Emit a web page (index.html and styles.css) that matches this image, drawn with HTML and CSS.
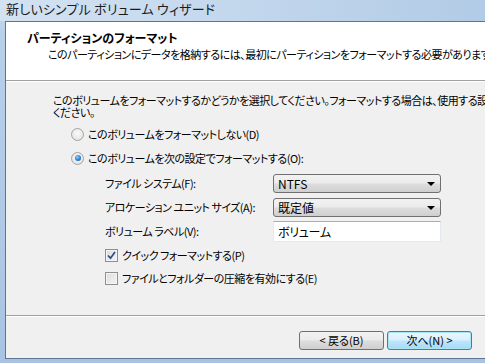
FILE: index.html
```html
<!DOCTYPE html>
<html lang="ja">
<head>
<meta charset="utf-8">
<link rel="stylesheet" href="styles.css">
</head>
<body>
<div class="titlebar">新しいシンプル ボリューム ウィザード</div>
<div class="frame">
  <div class="header">
    <div class="h-title">パーティションのフォーマット</div>
    <div class="h-sub">このパーティションにデータを格納するには、最初にパーティションをフォーマットする必要があります。</div>
  </div>
  <div class="sep"></div>
  <div class="content">
    <p class="intro">このボリュームをフォーマットするかどうかを選択してください。フォーマットする場合は、使用する設定を選択して<br>ください。</p>
    <div class="radio-row"><span class="radio"></span><span>このボリュームをフォーマットしない(D)</span></div>
    <div class="radio-row"><span class="radio on"></span><span>このボリュームを次の設定でフォーマットする(O):</span></div>
    <div class="form">
      <div class="frow"><span class="flabel">ファイル システム(F):</span><span class="combo">NTFS<span class="arrow"></span></span></div>
      <div class="frow"><span class="flabel">アロケーション ユニット サイズ(A):</span><span class="combo">既定値<span class="arrow"></span></span></div>
      <div class="frow"><span class="flabel">ボリューム ラベル(V):</span><span class="textbox">ボリューム</span></div>
      <div class="check-row first"><span class="check on"><svg width="9" height="9" viewBox="0 0 9 9"><path d="M1 4.5 L3.5 7.2 L8 1" fill="none" stroke="#2c4a8a" stroke-width="1.7"/></svg></span><span>クイック フォーマットする(P)</span></div>
      <div class="check-row"><span class="check"></span><span>ファイルとフォルダーの圧縮を有効にする(E)</span></div>
    </div>
  </div>
  <div class="sep"></div>
  <div class="footer">
    <button class="btn">&lt; 戻る(B)</button>
    <button class="btn default">次へ(N) &gt;</button>
  </div>
</div>
</body>
</html>
```
FILE: styles.css
```css
html, body {
  margin: 0;
  padding: 0;
}
body {
  width: 485px;
  height: 363px;
  overflow: hidden;
  background: linear-gradient(180deg, #c9dcef 0%, #b7cfe9 10%, #a9c4e3 100%);
  font-family: "Noto Sans CJK JP", "Noto Sans", sans-serif;
  font-size: 11px;
  letter-spacing: -0.5px;
  color: #000;
  font-feature-settings: "palt";
}
.titlebar {
  height: 21px;
  padding-left: 6px;
  line-height: 17px;
  font-size: 13px;
  letter-spacing: 0.2px;
  color: #1b1b1b;
  white-space: nowrap;
  background: linear-gradient(90deg, #d3e2f1 0%, #c6d9ee 40%, #bcd2ea 70%, #b2cbe6 100%);
}
.frame {
  margin-left: 5px;
  width: 620px;
  height: 336px;
  border: 1px solid #5f7491;
  display: flex;
  flex-direction: column;
  background: #f0f0f0;
}
.header {
  background: #fff;
  height: 58px;
  padding-left: 21px;
  box-sizing: border-box;
  padding-top: 9px;
  white-space: nowrap;
}
.h-title {
  font-weight: bold;
  font-size: 12px;
  letter-spacing: 0;
  line-height: 14px;
}
.h-sub {
  margin-top: 2px;
  padding-left: 21px;
  line-height: 14px;
}
.sep {
  border-top: 1px solid #a0a0a0;
  border-bottom: 1px solid #fff;
}
.content {
  height: 233px;
  padding-left: 47px;
  box-sizing: border-box;
  white-space: nowrap;
}
.intro {
  margin: 12px 0 0 0;
  line-height: 12px;
}
.radio-row {
  display: flex;
  align-items: center;
  height: 16px;
  margin-top: 8px;
  margin-left: 18px;
}
.radio {
  width: 11px;
  height: 11px;
  border-radius: 50%;
  border: 1px solid #a3a3a3;
  background: radial-gradient(circle at 50% 40%, #fafafa 0%, #e6e6e6 70%, #d8d8d8 100%);
  margin-right: 4px;
  flex: none;
  position: relative;
}
.radio.on::after {
  content: "";
  position: absolute;
  left: 2.5px;
  top: 2.5px;
  width: 6px;
  height: 6px;
  border-radius: 50%;
  background: radial-gradient(circle at 40% 35%, #8ed0ff 0%, #2b7fd0 55%, #164d8c 100%);
}
.form {
  margin-left: 52px;
  margin-top: 6px;
}
.frow {
  display: flex;
  align-items: center;
  height: 22px;
  margin-bottom: 2px;
}
.flabel {
  width: 168px;
  flex: none;
}
.combo {
  position: relative;
  width: 168px;
  height: 19px;
  box-sizing: border-box;
  border: 1px solid #707070;
  border-radius: 3px;
  background: linear-gradient(180deg, #f2f2f2 0%, #ebebeb 48%, #dddddd 52%, #cfcfcf 100%);
  padding-left: 4px;
  line-height: 17px;
  font-size: 12px;
  letter-spacing: 0;
}
.arrow {
  position: absolute;
  right: 5px;
  top: 7px;
  width: 0;
  height: 0;
  border-left: 4px solid transparent;
  border-right: 4px solid transparent;
  border-top: 4px solid #000;
}
.textbox {
  width: 168px;
  height: 21px;
  box-sizing: border-box;
  border: 1px solid #e3e9ef;
  border-top-color: #abadb3;
  background: #fff;
  padding-left: 4px;
  line-height: 19px;
  font-size: 12px;
  letter-spacing: -0.3px;
}
.check-row {
  display: flex;
  align-items: center;
  height: 16px;
  margin-top: 7px;
}
.check-row.first {
  margin-top: 5px;
}
.check {
  width: 11px;
  height: 11px;
  border: 1px solid #8e8f8f;
  background: linear-gradient(135deg, #dcdcdc 0%, #f4f4f4 100%);
  box-shadow: inset 0 0 0 1px #f4f4f4;
  margin-right: 4px;
  flex: none;
  display: flex;
  align-items: center;
  justify-content: center;
}
.footer {
  flex: 1;
  display: flex;
  align-items: flex-start;
  padding-left: 293px;
  padding-top: 14px;
  gap: 3px;
}
.btn {
  width: 85px;
  height: 19px;
  box-sizing: border-box;
  font-family: inherit;
  font-size: 11px;
  font-feature-settings: "palt";
  letter-spacing: 0;
  color: #000;
  border: 1px solid #707070;
  border-radius: 3px;
  background: linear-gradient(180deg, #f2f2f2 0%, #ebebeb 48%, #dddddd 52%, #cfcfcf 100%);
  padding: 0;
  line-height: 15px;
}
.btn.default {
  border-color: #3c7fb1;
  box-shadow: inset 0 0 0 1px #a9e4f7;
  background: linear-gradient(180deg, #eaf6fd 0%, #d9f0fc 48%, #bee6fd 52%, #a7d9f5 100%);
}
```
